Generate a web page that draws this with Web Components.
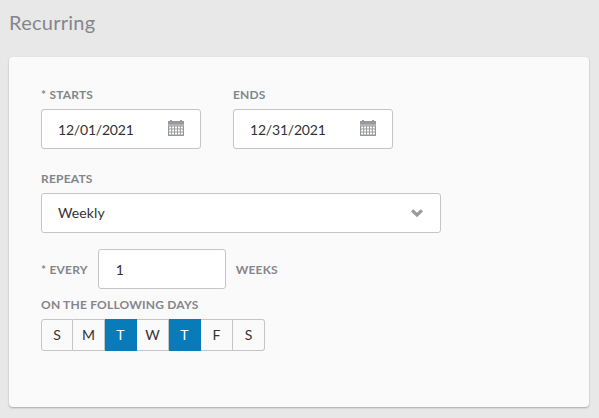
<!DOCTYPE html>
<html lang="en">
<head>
<meta charset="utf-8">
<title>Recurring</title>
<style>
body{margin:0;background:#e8e8e8;font-family:Lato,sans-serif;color:#333}
</style>
</head>
<body>
<recurring-panel></recurring-panel>
<script>
const define = (name, html) => {
  const t = document.createElement('template');
  t.innerHTML = html;
  customElements.define(name, class extends HTMLElement {
    constructor() {
      super();
      this.attachShadow({mode: 'open'}).append(t.content.cloneNode(true));
    }
  });
};

define('field-label', `<style>
:host{display:block;font-size:12px;font-weight:700;line-height:16px;letter-spacing:.2px;color:#84868b;white-space:pre}
</style><slot></slot>`);

define('input-box', `<style>
:host{display:flex;align-items:center;justify-content:space-between;box-sizing:border-box;height:40px;padding:2px 16px 0;border:1px solid #c4c5c9;border-radius:3px;background:#fff;font-size:14px;line-height:20px;color:#333}
</style><span><slot></slot></span><slot name="icon"></slot>`);

define('calendar-icon', `<style>
:host{display:block;width:16px;height:16px;margin-top:-4px}
svg{display:block}
</style><svg width="16" height="16" viewBox="0 0 16 16">
<path fill="#98999c" d="M0 1h2V0h2v1h8V0h2v1h2v3.8H0z"/>
<path fill="#98999c" fill-rule="evenodd" d="M0 5.3h16V16H0zM1.2 6.6v2h2v-2zM4.1 6.6v2h2v-2zM7 6.6v2h2v-2zM9.9 6.6v2h2v-2zM12.8 6.6v2h2v-2zM1.2 9.6v2h2v-2zM4.1 9.6v2h2v-2zM7 9.6v2h2v-2zM9.9 9.6v2h2v-2zM12.8 9.6v2h2v-2zM1.2 12.6v2h2v-2zM4.1 12.6v2h2v-2zM7 12.6v2h2v-2zM9.9 12.6v2h2v-2zM12.8 12.6v2h2v-2z"/>
</svg>`);

define('chevron-icon', `<style>
:host{display:block;width:14px;height:10px}
svg{display:block}
</style><svg width="14" height="10" viewBox="0 0 14 10"><path d="M2.1 2.3 7 7 11.9 2.3" fill="none" stroke="#9a9b9e" stroke-width="3.2"/></svg>`);

define('day-toggle', `<style>
:host{display:flex;align-items:center;justify-content:center;box-sizing:border-box;width:32px;height:32px;border:solid #c4c5c9;border-width:1px 1px 1px 0;font-size:14px;line-height:20px;color:#333}
:host(:first-of-type){border-left-width:1px;border-radius:3px 0 0 3px}
:host(:last-of-type){border-radius:0 3px 3px 0}
:host([selected]){background:#087cbb;border-color:#087cbb;color:#fff}
</style><slot></slot>`);

define('day-picker', `<style>
:host{display:flex}
</style><slot></slot>`);

define('form-card', `<style>
:host{display:block;box-sizing:border-box;width:580px;height:350px;padding:30px 32px;background:#fafafa;border-radius:4px;box-shadow:0 1px 2px rgba(0,0,0,.28)}
</style><slot></slot>`);

define('recurring-panel', `<style>
:host{display:block;box-sizing:border-box;height:418px;padding:8px 10px 0 9px}
h1{margin:0 0 21px;font-size:20px;font-weight:400;line-height:28px;letter-spacing:.25px;color:#84868b}
.dates{display:flex;gap:32px}
.dates input-box{width:160px;margin-top:6px;letter-spacing:-.2px}
.repeat{margin-top:22px}
.repeat input-box{width:400px;margin-top:6px;padding-top:0;letter-spacing:.1px}
.every{display:flex;align-items:center;gap:10px;margin-top:16px}
.every field-label{padding-top:1px}
.every input-box{width:128px;padding-left:17px}
.days{margin-top:8px}
day-picker{margin-top:6px}
</style>
<h1>Recurring</h1>
<form-card>
  <div class="dates">
    <div><field-label>* STARTS</field-label><input-box>12/01/2021<calendar-icon slot="icon"></calendar-icon></input-box></div>
    <div><field-label>ENDS</field-label><input-box>12/31/2021<calendar-icon slot="icon"></calendar-icon></input-box></div>
  </div>
  <div class="repeat"><field-label>REPEATS</field-label><input-box>Weekly<chevron-icon slot="icon"></chevron-icon></input-box></div>
  <div class="every"><field-label>* EVERY</field-label><input-box>1</input-box><field-label>WEEKS</field-label></div>
  <div class="days"><field-label>ON THE FOLLOWING DAYS</field-label>
    <day-picker><day-toggle>S</day-toggle><day-toggle>M</day-toggle><day-toggle selected>T</day-toggle><day-toggle>W</day-toggle><day-toggle selected>T</day-toggle><day-toggle>F</day-toggle><day-toggle>S</day-toggle></day-picker>
  </div>
</form-card>`);
</script>
</body>
</html>
